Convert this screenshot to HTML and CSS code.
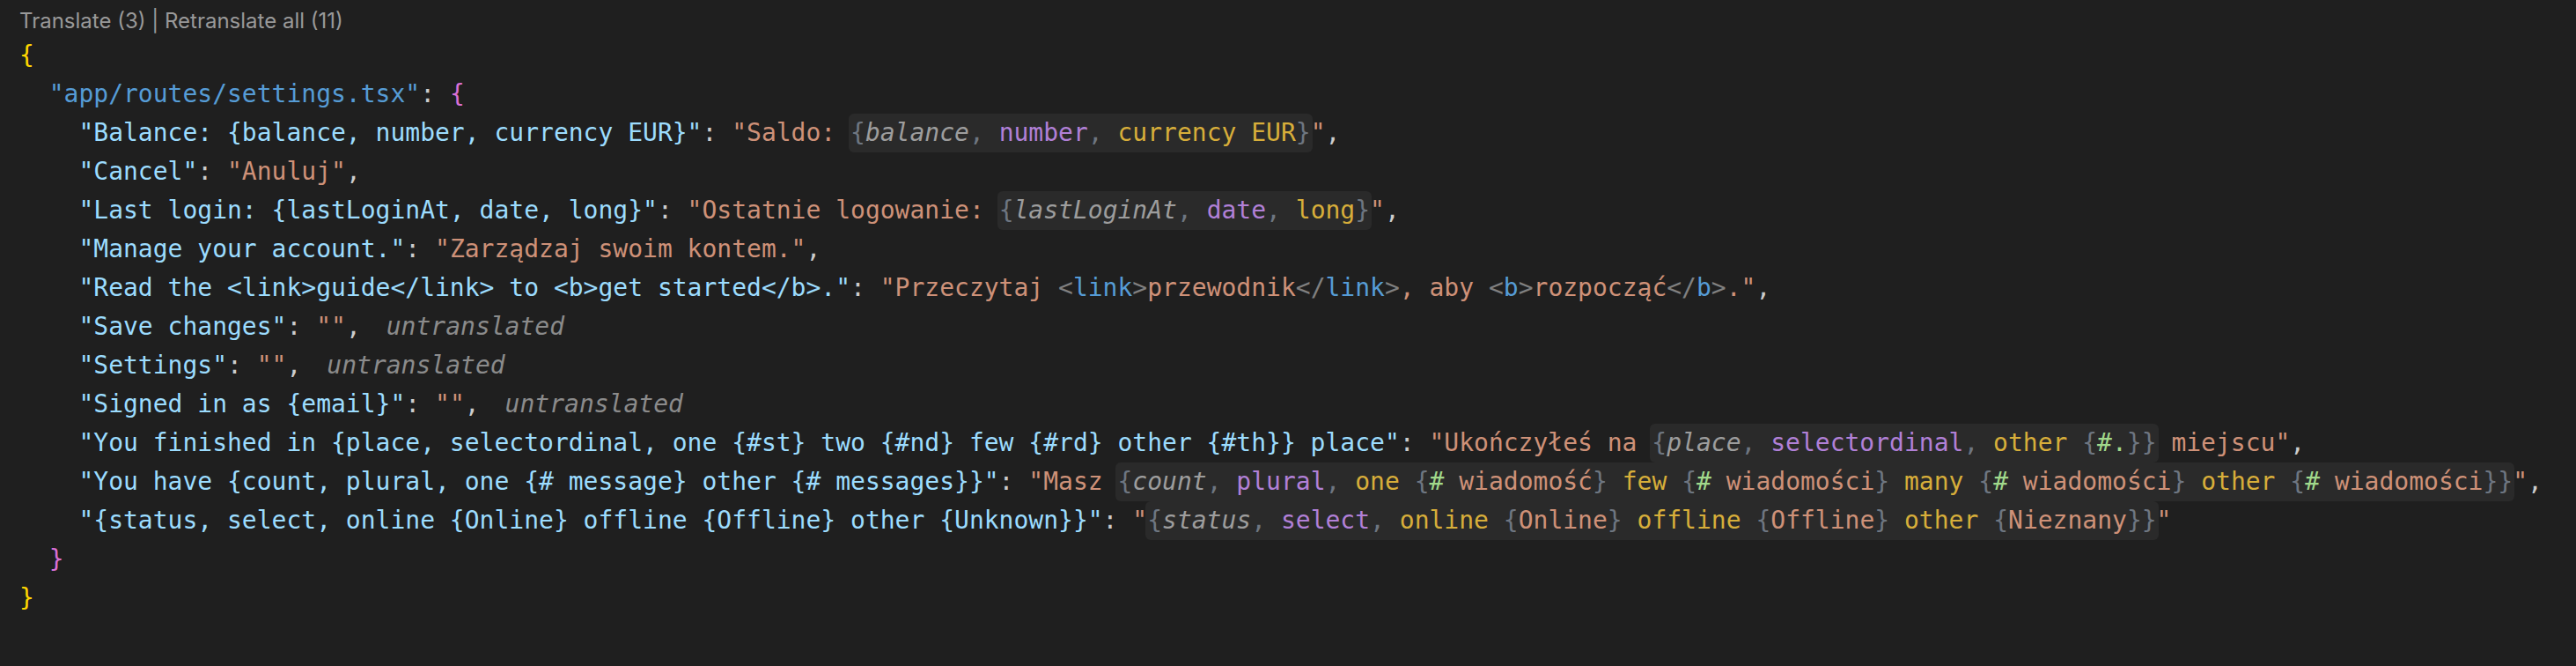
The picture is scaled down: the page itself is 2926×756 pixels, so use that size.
FILE: index.html
```html
<!DOCTYPE html>
<html lang="en">
<head>
<meta charset="utf-8">
<title>Translations</title>
<link rel="stylesheet" href="styles.css">
</head>
<body>
<div class="editor">
  <div class="lens">Translate (3) | Retranslate all (11)</div>
  <div class="code">
    <div class="line"><span class="b1">{</span></div>
    <div class="line">  <span class="k1">"app/routes/settings.tsx"</span><span class="p">: </span><span class="b2">{</span></div>
    <div class="line">    <span class="k2">"Balance: {balance, number, currency EUR}"</span><span class="p">: </span><span class="s">"Saldo: </span><span class="hl"><span class="g">{</span><span class="v">balance</span><span class="g">, </span><span class="t">number</span><span class="g">, </span><span class="o">currency EUR</span><span class="g">}</span></span><span class="q">"</span><span class="p">,</span></div>
    <div class="line">    <span class="k2">"Cancel"</span><span class="p">: </span><span class="s">"Anuluj"</span><span class="p">,</span></div>
    <div class="line">    <span class="k2">"Last login: {lastLoginAt, date, long}"</span><span class="p">: </span><span class="s">"Ostatnie logowanie: </span><span class="hl"><span class="g">{</span><span class="v">lastLoginAt</span><span class="g">, </span><span class="t">date</span><span class="g">, </span><span class="o">long</span><span class="g">}</span></span><span class="q">"</span><span class="p">,</span></div>
    <div class="line">    <span class="k2">"Manage your account."</span><span class="p">: </span><span class="s">"Zarządzaj swoim kontem."</span><span class="p">,</span></div>
    <div class="line">    <span class="k2">"Read the &lt;link&gt;guide&lt;/link&gt; to &lt;b&gt;get started&lt;/b&gt;."</span><span class="p">: </span><span class="s">"Przeczytaj </span><span class="tg">&lt;</span><span class="tn">link</span><span class="tg">&gt;</span><span class="s">przewodnik</span><span class="tg">&lt;/</span><span class="tn">link</span><span class="tg">&gt;</span><span class="s">, aby </span><span class="tg">&lt;</span><span class="tn">b</span><span class="tg">&gt;</span><span class="s">rozpocząć</span><span class="tg">&lt;/</span><span class="tn">b</span><span class="tg">&gt;</span><span class="s">."</span><span class="p">,</span></div>
    <div class="line">    <span class="k2">"Save changes"</span><span class="p">: </span><span class="s">""</span><span class="p">,</span><span class="un">untranslated</span></div>
    <div class="line">    <span class="k2">"Settings"</span><span class="p">: </span><span class="s">""</span><span class="p">,</span><span class="un">untranslated</span></div>
    <div class="line">    <span class="k2">"Signed in as {email}"</span><span class="p">: </span><span class="s">""</span><span class="p">,</span><span class="un">untranslated</span></div>
    <div class="line">    <span class="k2">"You finished in {place, selectordinal, one {#st} two {#nd} few {#rd} other {#th}} place"</span><span class="p">: </span><span class="s">"Ukończyłeś na </span><span class="hl"><span class="g">{</span><span class="v">place</span><span class="g">, </span><span class="t">selectordinal</span><span class="g">, </span><span class="o">other</span> <span class="g">{</span><span class="h">#.</span><span class="g">}}</span></span><span class="s"> miejscu"</span><span class="p">,</span></div>
    <div class="line">    <span class="k2">"You have {count, plural, one {# message} other {# messages}}"</span><span class="p">: </span><span class="s">"Masz </span><span class="hl"><span class="g">{</span><span class="v">count</span><span class="g">, </span><span class="t">plural</span><span class="g">, </span><span class="o">one</span> <span class="g">{</span><span class="h">#</span><span class="s"> wiadomość</span><span class="g">}</span> <span class="o">few</span> <span class="g">{</span><span class="h">#</span><span class="s"> wiadomości</span><span class="g">}</span> <span class="o">many</span> <span class="g">{</span><span class="h">#</span><span class="s"> wiadomości</span><span class="g">}</span> <span class="o">other</span> <span class="g">{</span><span class="h">#</span><span class="s"> wiadomości</span><span class="g">}}</span></span><span class="q">"</span><span class="p">,</span></div>
    <div class="line">    <span class="k2">"{status, select, online {Online} offline {Offline} other {Unknown}}"</span><span class="p">: </span><span class="s">"</span><span class="hl"><span class="g">{</span><span class="v">status</span><span class="g">, </span><span class="t">select</span><span class="g">, </span><span class="o">online</span> <span class="g">{</span><span class="s">Online</span><span class="g">}</span> <span class="o">offline</span> <span class="g">{</span><span class="s">Offline</span><span class="g">}</span> <span class="o">other</span> <span class="g">{</span><span class="s">Nieznany</span><span class="g">}}</span></span><span class="q">"</span></div>
    <div class="line">  <span class="b2">}</span></div>
    <div class="line"><span class="b1">}</span></div>
  </div>
</div>
</body>
</html>
```

FILE: styles.css
```css
html, body {
  margin: 0;
  padding: 0;
  background: #1f1f1f;
}

.editor {
  padding-left: 22px;
  min-height: 756px;
  box-sizing: border-box;
}

.lens {
  font-family: Inter, "Liberation Sans", sans-serif;
  font-size: 24px;
  color: #999999;
  height: 41px;
  padding-top: 6px;
  line-height: 35px;
  box-sizing: border-box;
}

.code {
  font-family: "DejaVu Sans Mono", monospace;
  font-size: 28px;
  color: #cccccc;
}

.line {
  height: 44px;
  line-height: 44px;
  white-space: pre;
}

.b1 { color: #ffd700; }
.b2 { color: #da70d6; }
.k1 { color: #569cd6; }
.k2 { color: #9cdcfe; }
.p { color: #cccccc; }
.s { color: #ce9178; }
.q { color: #ce9178; }

.hl {
  display: inline-block;
  height: 44px;
  background: #2a2a2a;
  border-radius: 6px;
  padding: 0 2px;
  margin: 0 -2px;
}

.g { color: #6e7681; }
.v { color: #9d9d9d; font-style: italic; }
.t { color: #b180d7; }
.o { color: #d7ae3a; }
.h { color: #a1d98b; }

.tg { color: #808080; }
.tn { color: #569cd6; }

.un {
  color: #8b8b8b;
  font-style: italic;
  margin-left: 29px;
}
```
